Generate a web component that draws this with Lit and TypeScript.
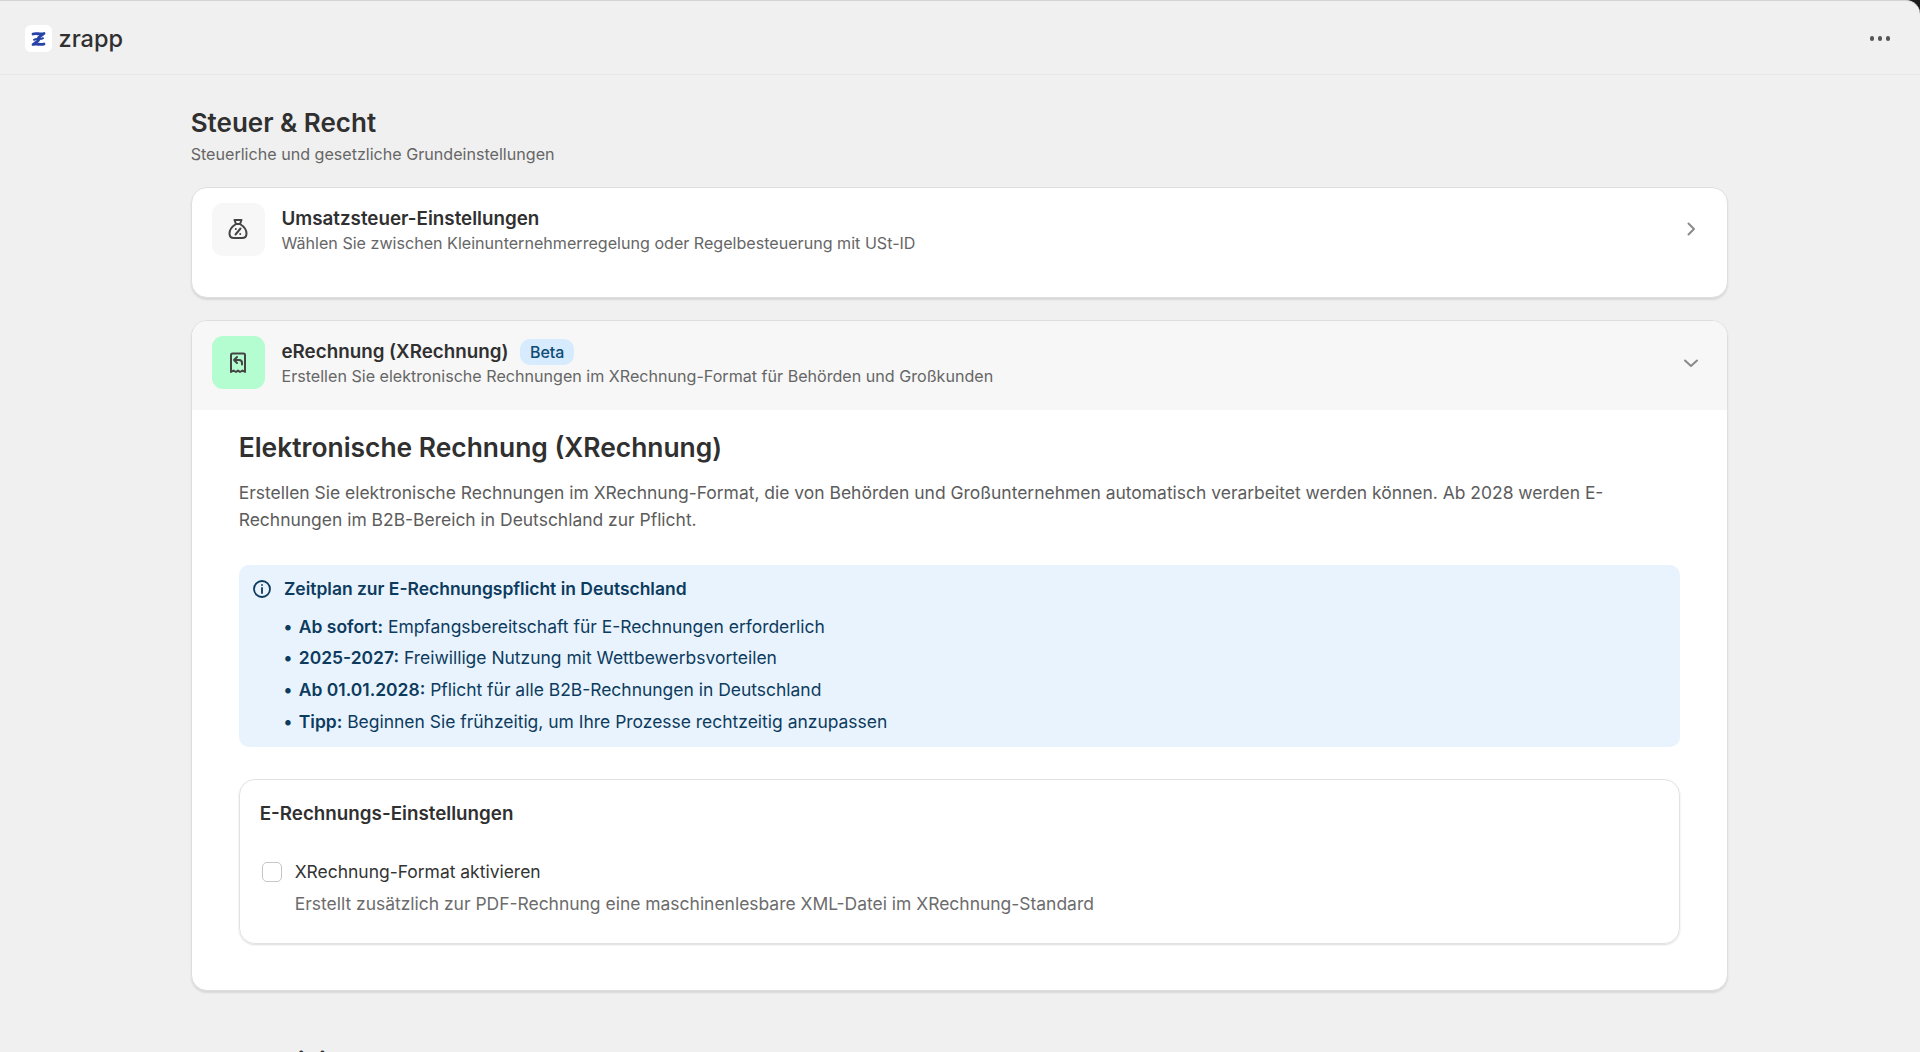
import { LitElement, html, css } from "lit";
import { customElement } from "lit/decorators.js";

@customElement("app-root")
export class AppRoot extends LitElement {
  static styles = css`
    :host { display: block; height: 1052px; overflow: hidden; background: #1c1c1c; font-family: Inter, "Liberation Sans", sans-serif; color: #303030; }
    .win { height: 1052px; overflow: hidden; background: #f0f0f0; border-radius: 0 14px 0 0; border-top: 1px solid #d4d4d4; box-sizing: border-box; }
    .bar { height: 74px; box-sizing: border-box; border-bottom: 1px solid #e8e8e8; display: flex; align-items: center; justify-content: space-between; padding: 0 30px 0 25px; }
    .brand { display: flex; align-items: center; gap: 6.5px; font-size: 23.5px; font-weight: 500; line-height: 27px; padding-top: 2px; }
    .logo { width: 27px; height: 27px; border-radius: 6px; background: #fff; display: flex; align-items: center; justify-content: center; }
    .dots { display: flex; gap: 3.5px; margin-top: 2px; }
    .dots i { width: 4.5px; height: 4.5px; border-radius: 50%; background: #555; }
    main { width: 1537.6px; margin-left: 190.7px; padding-top: 31px; }
    h1 { margin: 0; font-size: 26px; font-weight: 600; line-height: 34px; }
    .lead { font-size: 16.1px; line-height: 24px; color: #666; margin: 2px 0 20.8px; }
    .card { background: #fff; border: 1px solid #dedede; border-radius: 16px; box-shadow: 0 2px 2px rgba(0,0,0,.1); overflow: hidden; margin-bottom: 23px; }
    .card.one { height: 111.5px; box-sizing: border-box; margin-bottom: 22px; }
    .row { display: flex; align-items: center; padding: 15px 20px 0; gap: 16.5px; }
    .tint { background: #f7f7f7; height: 89px; box-sizing: border-box; padding-top: 15px; padding-bottom: 21px; }
    .ico { width: 53.3px; height: 53.3px; flex: none; border-radius: 11px; background: #f7f7f7; display: flex; align-items: center; justify-content: center; color: #444; }
    .ico.green { background: #b4fdd0; }
    .grow { flex: 1; min-width: 0; padding-top: 2.5px; }
    .t { font-size: 18.8px; font-weight: 600; line-height: 24px; height: 24px; display: flex; align-items: center; gap: 11.5px; }
    .s { font-size: 16.1px; line-height: 24px; color: #666; }
    .beta { font-size: 16px; font-weight: 500; line-height: 26.5px; padding: 0 10px; border-radius: 10px; background: #d6ebfd; color: #0f4c75; }
    .chev { color: #8a8a8a; margin-right: 7.5px; display: block; flex: none; }
    .body { padding: 19px 47px 46.5px; }
    h2 { margin: 0; font-size: 26.4px; font-weight: 600; line-height: 36px; }
    .para { margin: 14px 0 31.6px; font-size: 17.47px; line-height: 27px; color: #5c5c5c; }
    .note { background: #e8f3fd; border-radius: 10px; padding: 9px 14px 9.5px 13.3px; color: #0d3b5e; margin-bottom: 31.5px; }
    .nh { display: flex; align-items: center; gap: 12px; font-size: 17.47px; font-weight: 600; line-height: 30px; margin-bottom: 6.8px; }
    ul { list-style: none; margin: 0; padding: 0 0 0 31px; font-size: 17.47px; line-height: 31.8px; }
    li::before { content: "•"; margin-right: 6px; }
    b { font-weight: 600; }
    .box { border: 1px solid #e2e2e2; border-radius: 16px; box-shadow: 0 1px 2px rgba(0,0,0,.14); padding: 19px 20px 23px; }
    h3 { margin: 0 0 27px; font-size: 18.8px; font-weight: 600; line-height: 30px; }
    .ck { display: flex; align-items: center; gap: 12.4px; font-size: 17.47px; line-height: 32px; color: #333; padding-left: 2px; }
    .cb { width: 20.6px; height: 20.6px; flex: none; box-sizing: border-box; border: 1.5px solid #c6c6c6; border-radius: 5px; background: #fff; }
    .hint { font-size: 17.47px; line-height: 32px; color: #6c6c6c; padding-left: 35px; }
    .next { margin: 54px 0 0; font-size: 26px; font-weight: 600; line-height: 34px; }
  `;

  render() {
    return html`<div class="win">
      <div class="bar">
        <div class="brand">
          <span class="logo"><svg width="15" height="16" viewBox="0 0 15 16" fill="none" stroke="#2743a8" stroke-width="2.800" stroke-linecap="round" stroke-linejoin="round"><path d="M2 3C5.500 1.500 9 4 13 2.500L7.500 6.600"/><path d="M7.500 9.400L2 13.500C6 12 9.500 14.500 13 13"/><path d="M3 8.800C6 6.800 9 9.200 12 7.200" stroke-width="2"/></svg></span>
          zrapp
        </div>
        <div class="dots"><i></i><i></i><i></i></div>
      </div>
      <main>
        <h1>Steuer &amp; Recht</h1>
        <div class="lead">Steuerliche und gesetzliche Grundeinstellungen</div>
        <section class="card one">
          <div class="row">
            <div class="ico"><svg width="20" height="22" viewBox="0 0 20 22" fill="none" stroke="currentColor" stroke-width="2" stroke-linecap="round" stroke-linejoin="round"><path d="M6.500 2h7l-1.500 4h-4zM8 6C4 8.500 1.500 12.500 1.500 15.500 1.500 18.500 3.500 20 6 20h8c2.500 0 4.500-1.500 4.500-4.500C18.500 12.500 16 8.500 12 6z"/><path d="M12.500 10.500l-5 6M7.800 11h.01M12.200 16h.01"/></svg></div>
            <div class="grow">
              <div class="t">Umsatzsteuer-Einstellungen</div>
              <div class="s">Wählen Sie zwischen Kleinunternehmerregelung oder Regelbesteuerung mit USt-ID</div>
            </div>
            <svg class="chev" width="18" height="18" viewBox="0 0 18 18" fill="none" stroke="currentColor" stroke-width="2" stroke-linecap="round" stroke-linejoin="round"><path d="M6.500 3.500L12 9l-5.500 5.500"/></svg>
          </div>
        </section>
        <section class="card">
          <div class="row tint">
            <div class="ico green"><svg width="18" height="22" viewBox="0 0 18 22" fill="none" stroke="currentColor" stroke-width="2" stroke-linecap="round" stroke-linejoin="round"><path d="M2 20V3c0-.8.700-1.500 1.500-1.500h11c.8 0 1.500.7 1.500 1.500v17l-2.500-1.500L11 20l-2-1.500L7 20l-2.500-1.500z"/><path d="M8 5L5 8l3 3M5 8h5c1.800 0 3 1.200 3 3v1.500"/></svg></div>
            <div class="grow">
              <div class="t">eRechnung (XRechnung) <span class="beta">Beta</span></div>
              <div class="s">Erstellen Sie elektronische Rechnungen im XRechnung-Format für Behörden und Großkunden</div>
            </div>
            <svg class="chev" width="18" height="18" viewBox="0 0 18 18" fill="none" stroke="currentColor" stroke-width="2" stroke-linecap="round" stroke-linejoin="round"><path d="M3 6.500L9 12l6-5.500"/></svg>
          </div>
          <div class="body">
            <h2>Elektronische Rechnung (XRechnung)</h2>
            <p class="para">Erstellen Sie elektronische Rechnungen im XRechnung-Format, die von Behörden und Großunternehmen automatisch verarbeitet werden können. Ab 2028 werden E-Rechnungen im B2B-Bereich in Deutschland zur Pflicht.</p>
            <div class="note">
              <div class="nh"><svg width="20" height="20" viewBox="0 0 20 20" fill="none" stroke="currentColor" stroke-width="1.800" stroke-linecap="round"><circle cx="10" cy="10" r="8"/><path d="M10 9v5M10 6h.01"/></svg>Zeitplan zur E-Rechnungspflicht in Deutschland</div>
              <ul>
                <li><b>Ab sofort:</b> Empfangsbereitschaft für E-Rechnungen erforderlich</li>
                <li><b>2025-2027:</b> Freiwillige Nutzung mit Wettbewerbsvorteilen</li>
                <li><b>Ab 01.01.2028:</b> Pflicht für alle B2B-Rechnungen in Deutschland</li>
                <li><b>Tipp:</b> Beginnen Sie frühzeitig, um Ihre Prozesse rechtzeitig anzupassen</li>
              </ul>
            </div>
            <div class="box">
              <h3>E-Rechnungs-Einstellungen</h3>
              <div class="ck"><span class="cb"></span>XRechnung-Format aktivieren</div>
              <div class="hint">Erstellt zusätzlich zur PDF-Rechnung eine maschinenlesbare XML-Datei im XRechnung-Standard</div>
            </div>
          </div>
        </section>
        <div class="next">Automatisierung</div>
      </main>
    </div>`;
  }
}
